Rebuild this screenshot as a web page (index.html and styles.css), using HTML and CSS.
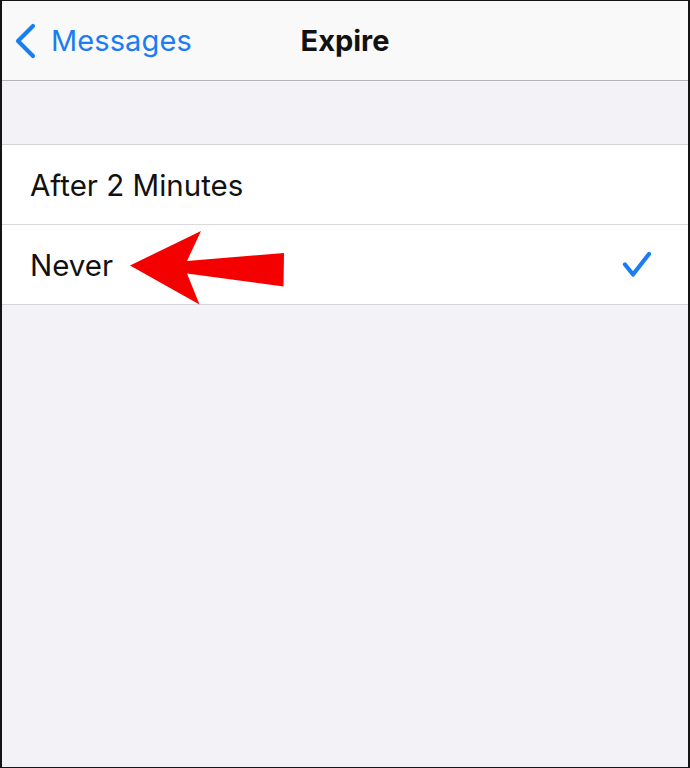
FILE: index.html
```html
<!DOCTYPE html>
<html lang="en">
<head>
<meta charset="utf-8">
<title>Expire</title>
<link rel="stylesheet" href="styles.css">
</head>
<body>
<div class="frame">
  <header class="nav">
    <a class="back">
      <svg class="chev" width="24" height="38" viewBox="0 0 24 38"><path d="M19 4 L4 19 L19 34" fill="none" stroke="#1a7ef2" stroke-width="4.2" stroke-linecap="round" stroke-linejoin="round"/></svg>
      <span class="back-label">Messages</span>
    </a>
    <h1 class="title">Expire</h1>
  </header>
  <div class="band"></div>
  <ul class="list">
    <li class="row"><span class="label">After 2 Minutes</span></li>
    <li class="row">
      <span class="label">Never</span>
      <svg class="check" width="30" height="28" viewBox="0 0 30 28"><path d="M3 13.5 L11 23.5 L27 3" fill="none" stroke="#1a7ef2" stroke-width="4.2" stroke-linecap="round" stroke-linejoin="round"/></svg>
    </li>
  </ul>
  <svg class="arrow" width="690" height="768" viewBox="0 0 690 768"><polygon points="130,265.5 201,231 187,261 284,253 283.5,286.5 187,273.5 199.5,304.5" fill="#f40000"/></svg>
</div>
</body>
</html>
```

FILE: styles.css
```css
* { box-sizing: border-box; }
html, body { margin: 0; padding: 0; }
body { font-family: Inter, "Liberation Sans", sans-serif; background: #fff; }
.frame {
  position: relative;
  width: 690px;
  height: 768px;
  border-top: 1px solid #141414;
  border-left: 2px solid #141414;
  border-right: 2px solid #141414;
  border-bottom: 1px solid #141414;
  background: #f2f2f7;
  overflow: hidden;
}
.nav {
  position: relative;
  height: 80px;
  background: #f9f9fa;
  border-bottom: 1px solid #b4b4b6;
  display: flex;
  align-items: center;
  justify-content: center;
}
.back {
  position: absolute;
  left: 12px;
  top: 0;
  bottom: 0;
  display: flex;
  align-items: center;
  color: #1a7ef2;
  font-size: 29px;
  letter-spacing: 0.1px;
}
.chev { margin-right: 13px; }
.title {
  margin: 0;
  font-size: 29px;
  font-weight: 700;
  color: #111;
}
.band {
  height: 64px;
  border-bottom: 1px solid #d3d3d7;
}
.list {
  list-style: none;
  margin: 0;
  padding: 0;
  background: #fff;
  border-bottom: 1px solid #d6d6da;
}
.row {
  position: relative;
  height: 80px;
  display: flex;
  align-items: center;
  justify-content: space-between;
  padding: 0 36px 0 28px;
  font-size: 29.5px;
  color: #111;
}
.row + .row { border-top: 1px solid #dadade; }
.row:first-child { height: 79px; }
.label { display: block; }
.check { margin-top: 1px; }
.arrow {
  position: absolute;
  left: -2px;
  top: -1px;
  pointer-events: none;
}
```
